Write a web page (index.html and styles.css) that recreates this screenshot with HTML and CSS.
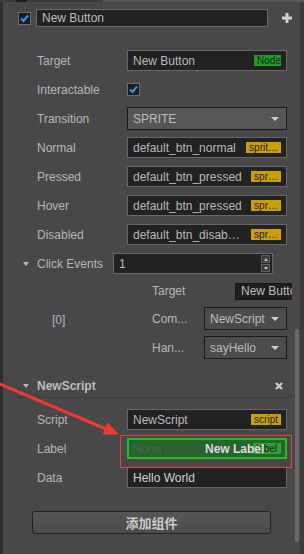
FILE: index.html
```html
<!DOCTYPE html>
<html>
<head>
<meta charset="utf-8">
<link rel="stylesheet" href="styles.css">
</head>
<body>
<div class="topbar"><span class="tb-a"></span><span class="tb-b"></span><span class="tb-c"></span><span class="tb-d"></span></div>
<div class="frame">
  <div class="lstrip"></div>
  <div class="panel">
    <div class="node-head">
      <span class="cb"><svg width="11" height="11" viewBox="0 0 11 11"><path d="M2 5.5 L4.5 8 L9 2.5" fill="none" stroke="#2a9cf5" stroke-width="2"/></svg></span>
      <div class="name-input">New Button</div>
      <span class="plus"><svg width="10" height="10" viewBox="0 0 10 10"><path d="M3.5 0h3v3.5h3.5v3h-3.5v3.5h-3v-3.5h-3.5v-3h3.5z" fill="#d2d2d2"/></svg></span>
    </div>

    <div class="props">
      <div class="row"><span class="lbl">Target</span><div class="field input"><span class="val">New Button</span><span class="badge node">Node</span></div></div>
      <div class="row"><span class="lbl">Interactable</span><span class="cb"><svg width="11" height="11" viewBox="0 0 11 11"><path d="M2 5.5 L4.5 8 L9 2.5" fill="none" stroke="#2a9cf5" stroke-width="2"/></svg></span></div>
      <div class="row"><span class="lbl">Transition</span><div class="field select tall"><span class="val">SPRITE</span><span class="caret"></span></div></div>
      <div class="row"><span class="lbl">Normal</span><div class="field input"><span class="val">default_btn_normal</span><span class="badge sprite">sprit…</span></div></div>
      <div class="row"><span class="lbl">Pressed</span><div class="field input"><span class="val">default_btn_pressed</span><span class="badge sprite">spr…</span></div></div>
      <div class="row"><span class="lbl">Hover</span><div class="field input"><span class="val">default_btn_pressed</span><span class="badge sprite">spr…</span></div></div>
      <div class="row"><span class="lbl">Disabled</span><div class="field input"><span class="val short">default_btn_disab…</span><span class="badge sprite">spr…</span></div></div>
      <div class="row fold"><span class="tri"></span><span class="lbl">Click Events</span><div class="field input num"><span class="val">1</span><span class="spin"><span class="sp up"></span><span class="sp down"></span></span></div></div>

      <div class="events">
        <span class="idx">[0]</span>
        <div class="sub">
          <div class="subrow t"><span class="sublbl">Target</span><div class="subtarget">New Button</div></div>
          <div class="subrow"><span class="sublbl">Com...</span><div class="field select small"><span class="val">NewScript</span><span class="caret"></span></div></div>
          <div class="subrow"><span class="sublbl">Han...</span><div class="field select small"><span class="val">sayHello</span><span class="caret"></span></div></div>
        </div>
      </div>

      <div class="comp-head"><span class="tri"></span><span class="comp-title">NewScript</span><span class="close"><svg width="8" height="8" viewBox="0 0 8 8"><path d="M1 1L7 7M7 1L1 7" stroke="#cfcfcf" stroke-width="2.2"/></svg></span></div>

      <div class="comp-body">
        <div class="row"><span class="lbl">Script</span><div class="field input"><span class="val">NewScript</span><span class="badge sprite">script</span></div></div>
        <div class="row"><span class="lbl">Label</span><div class="field hl"><span class="val none">None</span><span class="badge lab">label</span><span class="drag">New Label</span></div></div>
        <div class="row"><span class="lbl">Data</span><div class="field input"><span class="val light">Hello World</span></div></div>
      </div>

      <div class="add-btn">添加组件</div>
    </div>
  </div>
  <div class="rstrip"></div>
</div>

<div class="scrollbar"></div>
<div class="mark-box"></div>
<svg class="arrow" width="304" height="554" viewBox="0 0 304 554">
  <line x1="-2" y1="383.2" x2="106" y2="429" stroke="#ee3a30" stroke-width="3"/>
  <polygon points="119,434.5 102.8,434.5 107.6,422.5" fill="#ee3a30"/>
</svg>
</body>
</html>
```

FILE: styles.css
```css
* { box-sizing: border-box; margin: 0; padding: 0; }
html, body { width: 304px; height: 554px; overflow: hidden; }
body {
  background: #484848;
  font-family: "Liberation Sans", Arial, sans-serif;
  font-size: 12px;
  color: #b6b6b6;
  position: relative;
}
.topbar { height: 2px; display: flex; }
.tb-a { width: 16px; background: #3b3b3b; }
.tb-b { width: 11px; background: #1f1f1f; }
.tb-c { width: 76px; background: #3b3b3b; }
.tb-d { flex: 1; background: #585858; }

.frame { display: flex; height: 552px; }
.lstrip { width: 3px; background: #2e2e2e; flex: none; }
.rstrip { width: 4px; background: #3d3d3d; flex: none; }
.panel { flex: 1; min-width: 0; }

.node-head { display: flex; align-items: center; height: 18px; margin-top: 7px; padding-left: 15px; }
.cb {
  width: 13px; height: 13px; flex: none;
  background: #1c1c1c; border: 1px solid #6d6d6d;
  display: flex; align-items: center; justify-content: center;
}
.name-input {
  width: 232px; height: 18px; margin-left: 5px;
  background: #222; border: 1px solid #6a6a6a;
  padding-left: 5px; line-height: 16px; color: #bdbdbd;
}
.plus { margin-left: 14px; width: 10px; height: 10px; display: flex; }

.props { margin-top: 19px; }
.row { display: flex; align-items: center; height: 29px; padding-left: 34px; }
.row.fold { padding-left: 20px; }
.lbl { width: 90px; flex: none; white-space: nowrap; }
.fold .lbl { width: 76px; }
.tri {
  width: 0; height: 0; flex: none; margin-right: 8px;
  border-left: 3px solid transparent; border-right: 3px solid transparent;
  border-top: 4px solid #b9b9b9;
}

.field { width: 160px; height: 21px; display: flex; align-items: center; flex: none; position: relative; }
.input { background: #222; border: 1px solid #676767; padding: 0 5px; color: #b9b9b9; }
.val { flex: 1; min-width: 0; white-space: nowrap; overflow: hidden; }
.val.short { flex: none; width: 110px; margin-right: auto; }
.val.light { color: #d2d2d2; }
.badge {
  flex: none; height: 11px; line-height: 11px; font-size: 10px;
  padding: 0 3px; color: #1c1c1c; white-space: nowrap;
}
.node { background: #1f9b2e; color: #0c2a0c; width: 27px; text-align: center; }
.sprite { background: #c9a000; }

.select { background: #565656; border: 1px solid #1a1a1a; padding: 0 7px 0 5px; color: #bcbcbc; }
.select.tall { height: 23px; }
.select.small { width: 83px; height: 23px; background: #4c4c4c; }
.caret {
  width: 0; height: 0; flex: none;
  border-left: 4px solid transparent; border-right: 4px solid transparent;
  border-top: 4px solid #cfcfcf;
}

.num { padding-right: 2px; }
.spin { display: flex; flex-direction: column; gap: 1px; width: 9px; height: 17px; }
.sp {
  flex: 1; background: #3a3a3a; border: 1px solid #5e5e5e;
  display: flex; align-items: center; justify-content: center;
}
.sp::after {
  content: ""; width: 0; height: 0;
  border-left: 2.5px solid transparent; border-right: 2.5px solid transparent;
}
.up::after { border-bottom: 3px solid #c4c4c4; }
.down::after { border-top: 3px solid #c4c4c4; }

.events { display: flex; align-items: center; }
.idx { width: 149px; padding-left: 49px; flex: none; }
.sub { width: 140px; overflow: hidden; display: flex; flex-direction: column; }
.subrow { display: flex; align-items: center; height: 29px; }
.subrow.t { height: 26px; }
.sublbl { width: 52px; flex: none; }
.subtarget {
  margin-left: 31px; width: 80px; height: 17px; flex: none;
  background: #1f1f1f; border: 1px solid #141414;
  padding-left: 5px; line-height: 15px; color: #bdbdbd; white-space: nowrap;
}

.comp-head {
  margin: 12px 8px 0 13px; height: 24px;
  border-bottom: 1px solid #3c3c3c;
  display: flex; align-items: center; padding: 0 9px 0 7px;
}
.comp-title { font-weight: bold; color: #bdbdbd; }
.close { margin-left: auto; display: flex; }
.comp-body { margin-top: 7px; }

.hl { background: #2a6331; border: 2px solid #1bc21b; padding: 0 4px; }
.val.none { color: #3d6c40; }
.lab { background: #34a03c; color: #0e220e; width: 28px; }
.drag {
  position: absolute; left: 76px; top: 2px;
  font-weight: bold; color: #dcdcdc; white-space: nowrap;
}

.add-btn {
  margin: 19px 0 0 29px; width: 239px; height: 23px;
  background: linear-gradient(#565656, #4b4b4b);
  border: 1px solid #222; border-radius: 3px;
  text-align: center; line-height: 21px;
  font-family: "Noto Sans CJK SC", sans-serif; font-weight: bold; font-size: 13px;
  color: #c9c9c9;
}

.scrollbar {
  position: absolute; left: 295px; top: 329px; width: 4px; height: 213px;
  background: #6a6a6a; border-radius: 2px;
}
.mark-box {
  position: absolute; left: 120px; top: 435px; width: 172px; height: 33px;
  border: 1.5px solid #e84040;
}
.arrow { position: absolute; left: 0; top: 0; pointer-events: none; }
```
